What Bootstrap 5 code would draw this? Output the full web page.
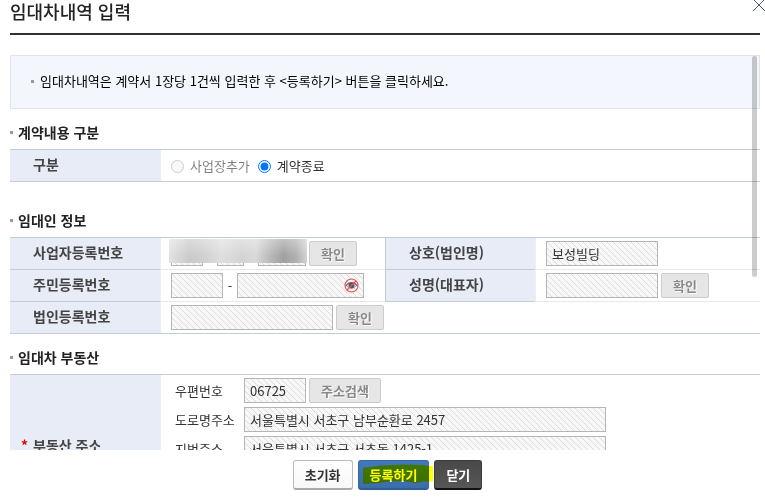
<!DOCTYPE html>
<html lang="ko">
<head>
<meta charset="utf-8">
<meta name="viewport" content="width=device-width, initial-scale=1">
<title>임대차내역 입력</title>
<link href="https://cdn.jsdelivr.net/npm/bootstrap@5.3.0/dist/css/bootstrap.min.css" rel="stylesheet">
<style>
  body { font-family: "Noto Sans CJK KR", sans-serif; font-size: 13px; line-height: 20px; color: #333; background: #fff; }
  .dialog-head { margin: 0 5px 20px 10px; border-bottom: 2px solid #332f30; padding-bottom: 11px; }
  .dialog-title { font-size: 18px; line-height: 22px; font-weight: 500; color: #222; }
  .close-x { width: 12px; height: 12px; line-height: 0; }
  .scroll-wrap { margin: 0 5px 0 10px; min-height: 0; }
  .scroll-area { scrollbar-width: none; }
  .scroll-area::-webkit-scrollbar { display: none; }
  .thumb { top: 1px; right: 3px; width: 5px; height: 56%; border-radius: 3px; background: rgba(0,0,0,.2); }
  .notice { background: #f3f7fd; border: 1px solid #dfe4ee; padding: 15px 20px 17px; color: #000; }
  .notice::before, .section-title::before { content: ""; width: 3px; height: 3px; background: #999; flex: none; }
  .notice::before { margin-right: 6px; }
  .section-title::before { margin-right: 5px; }
  .section-title { font-size: 14px; line-height: 31px; padding-bottom: 1px; font-weight: 700; color: #222; }
  .section-gap { margin-top: 23px; }
  .form-grid { table-layout: fixed; border-collapse: separate; border-spacing: 0; border-top: 1px solid #c3cdd8; border-bottom: 1px solid #c3cdd8; }
  .form-grid th, .form-grid td { height: 31px; padding: 3px 0; }
  .form-grid th { background: #e8ecf6; padding: 1px 0 5px 23px; font-size: 14px; font-weight: 700; line-height: 20px; color: #444; }
  .form-grid td { padding-left: 10px; border-left: 1px solid #eee; }
  .form-grid tr:not(:last-child) th { border-bottom: 1px solid #c3cdd8; }
  .form-grid tr:not(:last-child) td { border-bottom: 1px solid #e8e8e8; }
  .form-grid tr:not(:last-child) th ~ th { border-left: 1px solid #c3cdd8; }
  .form-grid .tall th, .form-grid .tall td { height: 144px; }
  .hatch { display: block; height: 25px; padding: 0 5px 1px; border: 1px solid #b5b5b5; border-radius: 0; color: #333; outline: 0;
    background: #f8f8f8 linear-gradient(45deg, transparent 44%, #dcdcdc 45% 55%, transparent 56%) 0 0 / 6px 6px; }
  .w-reg1 { width: 32px; } .w-reg2 { width: 27px; } .w-reg3 { width: 48px; }
  .w-id1 { width: 52px; } .w-id2 { width: 127px; } .w-corp { width: 162px; }
  .w-name { width: 112px; } .w-zip { width: 62px; } .w-addr { width: 362px; }
  .sep { width: 14px; text-align: center; }
  .eye { right: 5px; top: 5px; }
  .btn-sub { height: 25px; padding: 0 11px; border: 1px solid #ccc; border-radius: 2px; background: #e6e6e6; color: #888; font-size: 13px; line-height: 21px; font-weight: 700; text-shadow: 1px 1px 0 #fff; margin-left: 3px; }
  .btn-sub:disabled { opacity: 1; background: #e6e6e6; color: #888; border-color: #ccc; }
  .redacted { left: 8px; top: 1px; width: 138px; height: 24px;
    background: linear-gradient(90deg, #e2e2e2, #cbcbcb 14%, #cdcdcd 22%, #dedede 38%, #d4d4d4 53%, #d9d9d9 63%, #bababa 73%, #a0a0a0 83%, #b0b0b0 92%, #d3d3d3); }
  .redacted::after { content: ""; position: absolute; inset: 0; background: linear-gradient(rgba(255,255,255,.35), rgba(255,255,255,0) 70%); }
  .choice input { width: 13px; height: 13px; margin: 2px 6px 0 0; }
  .addr-label { width: 69px; }
  .required { left: 11px; color: #d00; }
  .dialog-foot { height: 53px; padding: 10px 0 0 10px; gap: 5px; }
  .btn-main { height: 30px; padding: 0 11px; border-radius: 3px; font-size: 13px; line-height: 26px; font-weight: 700; }
  .btn-reset, .btn-reset:hover { background: linear-gradient(#fff, #f8f8f8); border: 1px solid #bbb; border-bottom: 2px solid #aaa; color: #333; }
  .btn-save, .btn-save:hover { background: linear-gradient(#4179bd, #3c6dab); border: 1px solid #3769a8; border-bottom: 2px solid #315d95; color: #fff; }
  .btn-shut, .btn-shut:hover { background: linear-gradient(#494949, #565656); border: 1px solid #3b3b3b; border-bottom: 2px solid #111; color: #fff; }
  .marker { left: 0; top: 0; mix-blend-mode: multiply; pointer-events: none; }
</style>
<script src="https://cdn.jsdelivr.net/npm/bootstrap@5.3.0/dist/js/bootstrap.bundle.min.js"></script>
</head>
<body class="vh-100 d-flex flex-column overflow-hidden">

<header class="dialog-head">
  <h1 class="dialog-title m-0">임대차내역 입력</h1>
  <button type="button" class="close-x position-absolute top-0 end-0 p-0 border-0 bg-transparent" aria-label="닫기">
    <svg width="12" height="12" viewBox="0 0 12 12" stroke="#4c5a7d" fill="none"><path d="M0.500 -0.500L12 11M11.500 -0.500L0 11"/></svg>
  </button>
</header>

<main class="scroll-wrap position-relative flex-grow-1">
  <div class="scroll-area h-100 overflow-auto">
    <div class="notice d-flex align-items-center">임대차내역은 계약서 1장당 1건씩 입력한 후 &lt;등록하기&gt; 버튼을 클릭하세요.</div>

    <h2 class="section-title d-flex align-items-center mt-2 mb-0">계약내용 구분</h2>
    <table class="form-grid w-100 align-middle">
      <colgroup><col style="width:20%"><col style="width:80%"></colgroup>
      <tr>
        <th scope="row">구분</th>
        <td>
          <div class="choice d-flex align-items-center">
            <input type="radio" name="kind" id="kindAdd" disabled><label for="kindAdd" class="text-black-50">사업장추가</label>
            <input type="radio" name="kind" id="kindEnd" class="ms-2" checked><label for="kindEnd">계약종료</label>
          </div>
        </td>
      </tr>
    </table>

    <h2 class="section-title section-gap d-flex align-items-center mb-0">임대인 정보</h2>
    <table class="form-grid w-100 align-middle">
      <colgroup><col style="width:20%"><col style="width:30%"><col style="width:20%"><col style="width:30%"></colgroup>
      <tr>
        <th scope="row">사업자등록번호</th>
        <td class="position-relative">
          <div class="d-flex align-items-center">
            <input class="hatch w-reg1" aria-label="사업자등록번호 1" readonly><span class="sep">-</span>
            <input class="hatch w-reg2" aria-label="사업자등록번호 2" readonly><span class="sep">-</span>
            <input class="hatch w-reg3" aria-label="사업자등록번호 3" readonly>
            <button type="button" class="btn btn-sub" disabled>확인</button>
          </div>
          <div class="redacted position-absolute"></div>
        </td>
        <th scope="row"><label for="firm">상호(법인명)</label></th>
        <td><input id="firm" class="hatch w-name" value="보성빌딩" readonly></td>
      </tr>
      <tr>
        <th scope="row">주민등록번호</th>
        <td>
          <div class="d-flex align-items-center">
            <input class="hatch w-id1" aria-label="주민등록번호 앞자리" readonly><span class="sep">-</span>
            <div class="position-relative">
              <input class="hatch w-id2" type="password" aria-label="주민등록번호 뒷자리" readonly>
              <svg class="eye position-absolute" width="15" height="15" viewBox="0 0 15 15" fill="none">
                <path d="M2 8C4.500 3.500 10.500 3.500 13 8" stroke="#626b78" stroke-width="1.300"/>
                <path d="M3 8Q7.500 12.500 12 8" stroke="#a0a6ae"/>
                <circle cx="7.500" cy="7.500" r="3" fill="#4c5968"/>
                <circle cx="7.500" cy="7.500" r="6.500" stroke="#f05252" stroke-width="1.200"/>
                <path d="M3 12L12 3" stroke="#f05252" stroke-width="1.300"/>
              </svg>
            </div>
          </div>
        </td>
        <th scope="row"><label for="owner">성명(대표자)</label></th>
        <td><div class="d-flex"><input id="owner" class="hatch w-name" readonly><button type="button" class="btn btn-sub" disabled>확인</button></div></td>
      </tr>
      <tr>
        <th scope="row"><label for="corp">법인등록번호</label></th>
        <td colspan="3"><div class="d-flex"><input id="corp" class="hatch w-corp" readonly><button type="button" class="btn btn-sub" disabled>확인</button></div></td>
      </tr>
    </table>

    <h2 class="section-title d-flex align-items-center mt-2 mb-0">임대차 부동산</h2>
    <table class="form-grid w-100">
      <colgroup><col style="width:20%"><col style="width:80%"></colgroup>
      <tr class="tall">
        <th scope="row" class="align-middle position-relative"><span class="required position-absolute">*</span>부동산 주소</th>
        <td class="align-top">
          <div class="d-grid ps-1 row-gap-1">
            <div class="d-flex align-items-center"><label for="zip" class="addr-label">우편번호</label><input id="zip" class="hatch w-zip" value="06725" readonly><button type="button" class="btn btn-sub" disabled>주소검색</button></div>
            <div class="d-flex align-items-center"><label for="road" class="addr-label">도로명주소</label><input id="road" class="hatch w-addr" value="서울특별시 서초구 남부순환로 2457" readonly></div>
            <div class="d-flex align-items-center"><label for="lot" class="addr-label">지번주소</label><input id="lot" class="hatch w-addr" value="서울특별시 서초구 서초동 1425-1" readonly></div>
          </div>
        </td>
      </tr>
    </table>
  </div>
  <div class="thumb position-absolute"></div>
</main>

<footer class="dialog-foot d-flex justify-content-center align-items-start flex-shrink-0">
  <button type="button" class="btn btn-main btn-reset">초기화</button>
  <div class="position-relative">
    <button type="button" class="btn btn-main btn-save d-block">등록하기</button>
    <svg class="marker position-absolute" width="78" height="30" viewBox="0 0 78 30"><path fill="#ff0" d="M5 7.500L13 7L22 5.500L45 4.500L68 5V6H75V21.500H66L58 23L45 21L30 21.500L22 23L5 24Z"/></svg>
  </div>
  <button type="button" class="btn btn-main btn-shut">닫기</button>
</footer>
</body>
</html>
